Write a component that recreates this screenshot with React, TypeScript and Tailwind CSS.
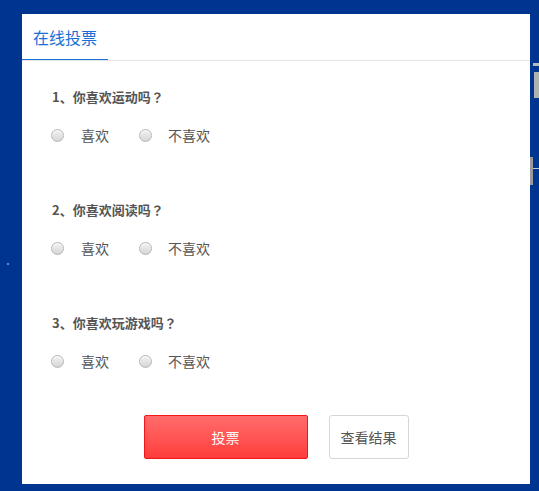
import React from 'react';

const questions = ['1、你喜欢运动吗', '2、你喜欢阅读吗', '3、你喜欢玩游戏吗'];

function Radio() {
  return (
    <span className="inline-block w-[13px] h-[13px] rounded-full border border-[#b5b5b5] bg-gradient-to-b from-[#f2f2f2] to-[#d6d6d6] shadow-[inset_0_1px_1px_rgba(255,255,255,0.8)]" />
  );
}

export default function App() {
  return (
    <div
      className="relative w-[539px] h-[491px] bg-[#003491] overflow-hidden pt-[14px] pl-[22px]"
      style={{ fontFamily: '"Microsoft YaHei", "Noto Sans CJK SC", sans-serif' }}
    >
      {/* decorations peeking out at the right */}
      <div className="absolute left-[533px] top-[63px] w-[6px] h-[3px] bg-[#b8b8b8]" />
      <div className="absolute left-[534px] top-[72px] w-[5px] h-[26px] bg-[#b0b0b0]" />
      <div className="absolute left-[530px] top-[157px] w-[3px] h-[28px] bg-[#9a9a9a]" />
      <div className="absolute left-[533px] top-[168px] w-[6px] h-[1px] bg-[#c8c8c8]" />
      <div className="absolute left-[7px] top-[263px] w-[2px] h-[2px] bg-[#6f87c0]" />

      <div className="w-[508px] h-[470px] bg-white flex flex-col">
        <div className="h-[47px] flex border-b border-[#e6e6e6]">
          <div className="w-[86px] h-[46px] border-b border-[#1a6fd6] pl-[11px] pt-[12px] text-[16px] leading-[22px] text-[#1a6fd6]">
            在线投票
          </div>
        </div>

        <div className="flex flex-col pl-[29px] pt-[26px]">
          {questions.map((q) => (
            <div key={q} className="flex flex-col h-[113px]">
              <div className="pl-[1px] text-[13px] leading-[20px] font-bold text-[#555]">
                {q}
                <span style={{ fontFamily: '"Noto Sans CJK TC", sans-serif' }}>？</span>
              </div>
              <div className="mt-[18px] flex items-center h-[20px] text-[14px] text-[#555]">
                <Radio />
                <span className="ml-[17px]">喜欢</span>
                <span className="ml-[30px] flex items-center">
                  <Radio />
                </span>
                <span className="ml-[16px]">不喜欢</span>
              </div>
            </div>
          ))}
        </div>

        <div className="flex justify-center gap-[21px] mt-[-11px]">
          <button className="w-[164px] h-[44px] rounded-[2px] border border-[#f01818] bg-gradient-to-b from-[#ff6b6b] to-[#ff3b3b] text-white text-[14px]">
            投票
          </button>
          <button className="w-[80px] h-[44px] rounded-[3px] border border-[#d6d6d6] bg-white text-[#555] text-[14px]">
            查看结果
          </button>
        </div>
      </div>
    </div>
  );
}
